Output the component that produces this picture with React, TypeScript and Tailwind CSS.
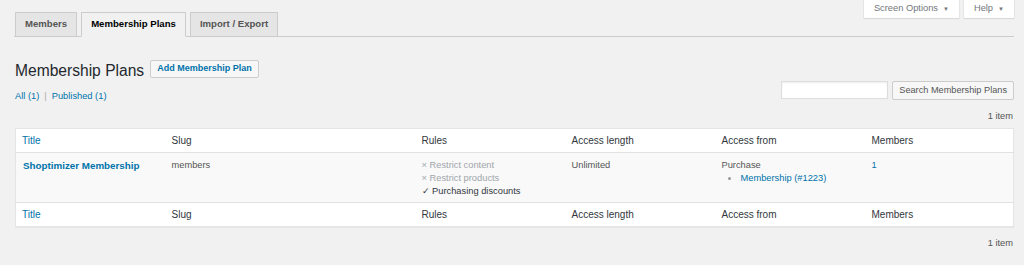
import React from 'react';

const link = 'text-[#0073aa]';

const Tab: React.FC<{ label: string; active?: boolean }> = ({ label, active }) => (
    <div
        className={`h-[25px] px-[9px] flex items-center border border-[#ccc] text-[9.6px] font-semibold ${
            active ? 'bg-[#f1f1f1] border-b-[#f1f1f1] text-black' : 'bg-[#e5e5e5] text-[#555]'
        }`}
    >
        {label}
    </div>
);

const MetaButton: React.FC<{ label: string }> = ({ label }) => (
    <div className="h-[18px] px-[10px] flex items-center gap-[5px] bg-white text-[9.3px] text-[#72777c] shadow-[0_0_0_1px_rgba(0,0,0,0.04),0_1px_1px_rgba(0,0,0,0.06)]">
        {label}
        <span className="text-[6px] leading-none">▼</span>
    </div>
);

const headers = ['Title', 'Slug', 'Rules', 'Access length', 'Access from', 'Members'];

const HeadRow: React.FC<{ top?: boolean }> = ({ top }) => (
    <tr className={`h-[24px] ${top ? 'border-b' : 'border-t'} border-[#e1e1e1]`}>
        {headers.map((h, i) => (
            <th
                key={h}
                className={`text-left font-normal text-[10px] px-[6px] align-middle ${i === 0 ? link : 'text-[#32373c]'}`}
            >
                {h}
            </th>
        ))}
    </tr>
);

export default function App() {
    return (
        <div className="w-[1024px] h-[265px] overflow-hidden bg-[#f1f1f1] font-['Liberation_Sans',Arial,sans-serif] text-[#444]">
            <div className="flex justify-between items-start ml-[14px] mr-[10px] h-[37px] border-b border-[#ccc]">
                <div className="flex gap-[4px] self-end -mb-px pl-px">
                    <Tab label="Members" />
                    <Tab label="Membership Plans" active />
                    <Tab label="Import / Export" />
                </div>
                <div className="flex gap-[5px]">
                    <MetaButton label="Screen Options" />
                    <MetaButton label="Help" />
                </div>
            </div>

            <div className="ml-[15px] mr-[10px]">
                <div className="flex items-center gap-[6px] mt-[23px] h-[18px]">
                    <h1 className="text-[15.6px] text-[#23282d] leading-none pt-[3px]">Membership Plans</h1>
                    <button className="h-[18px] px-[6px] border border-[#ccc] bg-[#f7f7f7] text-[9px] font-semibold text-[#0073aa] rounded-[2px]">
                        Add Membership Plan
                    </button>
                </div>

                <div className="flex justify-between items-start mt-[3px] h-[19px]">
                    <div className="text-[9.3px] leading-[12px] mt-[9px] text-[#555]">
                        <span className={link}>All (1)</span>
                        <span className="mx-[5px] text-[#aaa]">|</span>
                        <span className={link}>Published (1)</span>
                    </div>
                    <div className="flex gap-[4px]">
                        <div className="w-[107px] h-[18px] bg-white border border-[#ddd] shadow-[inset_0_1px_2px_rgba(0,0,0,0.07)]" />
                        <button className="h-[19px] px-[6px] border border-[#ccc] bg-[#f7f7f7] text-[9.2px] text-[#555] rounded-[2px]">
                            Search Membership Plans
                        </button>
                    </div>
                </div>

                <div className="text-right text-[9.3px] leading-[12px] text-[#555] mt-[10px] pr-px">1 item</div>

                <table className="w-[999px] mt-[6px] bg-white border border-[#e5e5e5] border-collapse table-fixed shadow-[0_1px_1px_rgba(0,0,0,0.04)]">
                    <colgroup>
                        <col className="w-[150px]" />
                        <col className="w-[250px]" />
                        <col className="w-[150px]" />
                        <col className="w-[150px]" />
                        <col className="w-[150px]" />
                        <col />
                    </colgroup>
                    <thead>
                        <HeadRow top />
                    </thead>
                    <tbody>
                        <tr className="h-[50px] bg-[#f9f9f9] align-top text-[9.3px] leading-[13px]">
                            <td className="px-[7px] pt-[6px]">
                                <span className="font-bold text-[#0073aa] text-[9.8px]">Shoptimizer Membership</span>
                            </td>
                            <td className="px-[6px] pt-[6px] text-[#555]">members</td>
                            <td className="px-[6px] pt-[6px]">
                                <div className="text-[#a0a5aa]">× Restrict content</div>
                                <div className="text-[#a0a5aa]">× Restrict products</div>
                                <div className="text-[#32373c]">✓ Purchasing discounts</div>
                            </td>
                            <td className="px-[6px] pt-[6px] text-[#555]">Unlimited</td>
                            <td className="px-[6px] pt-[6px] text-[#555]">
                                <div>Purchase</div>
                                <div className="flex items-center pl-[6px]">
                                    <span className="w-[3px] h-[3px] rounded-full bg-[#999] mr-[10px]" />
                                    <span className={link}>Membership (#1223)</span>
                                </div>
                            </td>
                            <td className={`px-[6px] pt-[6px] ${link}`}>1</td>
                        </tr>
                    </tbody>
                    <tfoot>
                        <HeadRow />
                    </tfoot>
                </table>

                <div className="text-right text-[9.3px] leading-[12px] text-[#555] mt-[10px] pr-px">1 item</div>
            </div>
        </div>
    );
}
